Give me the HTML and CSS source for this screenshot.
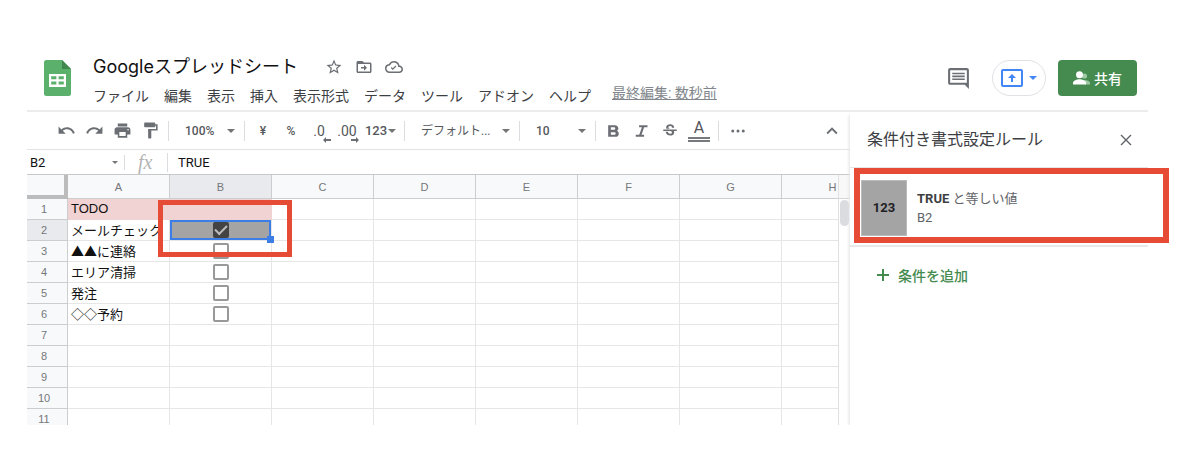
FILE: index.html
```
<!DOCTYPE html>
<html lang="ja">

<head>
  <title>Googleスプレッドシート</title>

  <meta charset="utf-8" />
  <meta name="viewport" content="width=device-width, initial-scale=1" />

  <link rel="stylesheet" href="styles.css">
</head>

<body>
  <header class="header">
    <svg class="logo" viewBox="0 0 27 36" width="27" height="36">
      <path fill="#5bb06c" d="M2.500 0H18l9 9v24.500a2.500 2.500 0 0 1-2.500 2.500h-22A2.500 2.500 0 0 1 0 33.500v-31A2.500 2.500 0 0 1 2.500 0z" />
      <path fill="#41884e" d="M18 0l9 9h-9z" />
      <path fill="#fff" fill-rule="evenodd" d="M5 14h17v13H5zM7.200 16.200v3h5.200v-3zM14.600 16.200v3h5.200v-3zM7.200 21.600v3h5.200v-3zM14.600 21.600v3h5.200v-3z" />
    </svg>

    <div class="doc">
      <div class="doc-title">
        <h1>Googleスプレッドシート</h1>
        <button class="doc-icon" aria-label="スター">
          <svg viewBox="0 0 24 24" width="18" height="18"><path d="M22 9.240l-7.190-.62L12 2 9.190 8.630 2 9.240l5.460 4.730L5.820 21 12 17.270 18.180 21l-1.630-7.030L22 9.240zM12 15.400l-3.760 2.270 1-4.280-3.320-2.880 4.380-.38L12 6.100l1.710 4.040 4.380.38-3.320 2.880 1 4.280L12 15.400z" /></svg>
        </button>
        <button class="doc-icon" aria-label="移動">
          <svg viewBox="0 0 24 24" width="18" height="18"><path d="M20 6h-8l-2-2H4c-1.100 0-2 .9-2 2v12c0 1.100.9 2 2 2h16c1.100 0 2-.9 2-2V8c0-1.100-.9-2-2-2zm0 12H4V8h16v10zm-8-1l4-4-4-4v3H8v2h4z" /></svg>
        </button>
        <button class="doc-icon" aria-label="保存済み">
          <svg viewBox="0 0 24 24" width="18" height="18"><path d="M19.350 10.040A7.490 7.490 0 0 0 12 4C9.110 4 6.600 5.640 5.350 8.040A5.994 5.994 0 0 0 0 14c0 3.310 2.690 6 6 6h13c2.760 0 5-2.240 5-5 0-2.640-2.050-4.780-4.650-4.960zM19 18H6c-2.210 0-4-1.790-4-4 0-2.050 1.530-3.760 3.560-3.970l1.070-.11.5-.95A5.469 5.469 0 0 1 12 6c2.620 0 4.880 1.860 5.390 4.430l.3 1.500 1.530.11A2.980 2.980 0 0 1 22 15c0 1.650-1.350 3-3 3zm-8.600-4.400l-1.500-1.500-1.200 1.200 2.700 2.700 4.800-4.800-1.200-1.200z" /></svg>
        </button>
      </div>
      <nav class="menu">
        <button>ファイル</button>
        <button>編集</button>
        <button>表示</button>
        <button>挿入</button>
        <button>表示形式</button>
        <button>データ</button>
        <button>ツール</button>
        <button>アドオン</button>
        <button>ヘルプ</button>
        <a class="last-edit" href="#">最終編集: 数秒前</a>
      </nav>
    </div>

    <div class="actions">
      <button class="comments" aria-label="コメント">
        <svg viewBox="0 0 24 24" width="25" height="25"><path d="M21.990 4c0-1.100-.89-2-1.990-2H4c-1.100 0-2 .9-2 2v12c0 1.100.9 2 2 2h14l4 4-.01-18zM20 4v12H4V4h16zM6 12h12v1.500H6zM6 9.200h12v1.500H6zM6 6.400h12v1.500H6z" /></svg>
      </button>
      <button class="present" aria-label="画面共有">
        <svg viewBox="0 0 22 18" width="22" height="18">
          <rect x="1" y="1" width="20" height="16" rx="1" fill="none" stroke="#4285f4" stroke-width="2" />
          <path fill="#4285f4" d="M11 5l4 4h-3v4h-2V9H7z" />
        </svg>
        <span class="arrow"></span>
      </button>
      <button class="share">
        <svg viewBox="0 0 17 14" width="17" height="14">
          <circle cx="11.500" cy="5" r="2.600" fill="#9dc8a4" />
          <path fill="#9dc8a4" d="M11 9c3 0 6 1.300 6 3v1.500h-5z" />
          <circle cx="6.500" cy="3.700" r="3.500" />
          <path d="M0 13.500V12c0-2.400 4-3.700 6.500-3.700S13 9.600 13 12v1.500z" />
        </svg>
        共有
      </button>
    </div>
  </header>

  <div class="workspace">
    <main class="editor">
      <div class="toolbar">
        <button class="tool" aria-label="元に戻す">
          <svg viewBox="0 0 24 24" width="19" height="19"><path d="M12.500 8c-2.650 0-5.050.99-6.900 2.600L2 7v9h9l-3.620-3.620c1.390-1.160 3.160-1.880 5.120-1.880 3.540 0 6.550 2.310 7.600 5.500l2.370-.78C21.080 11.030 17.150 8 12.500 8z" /></svg>
        </button>
        <button class="tool" aria-label="やり直し">
          <svg viewBox="0 0 24 24" width="19" height="19"><path d="M18.400 10.600C16.550 8.990 14.150 8 11.500 8c-4.650 0-8.580 3.030-9.960 7.220L3.900 16c1.050-3.190 4.050-5.500 7.600-5.500 1.950 0 3.730.72 5.120 1.880L13 16h9V7l-3.600 3.600z" /></svg>
        </button>
        <button class="tool" aria-label="印刷">
          <svg viewBox="0 0 24 24" width="19" height="19"><path d="M19 8H5c-1.660 0-3 1.340-3 3v6h4v4h12v-4h4v-6c0-1.660-1.340-3-3-3zm-3 11H8v-5h8v5zm3-7c-.55 0-1-.45-1-1s.45-1 1-1 1 .45 1 1-.45 1-1 1zm-1-9H6v4h12V3z" /></svg>
        </button>
        <button class="tool" aria-label="書式を貼り付け">
          <svg viewBox="0 0 24 24" width="19" height="19"><path d="M18 4V3c0-.55-.45-1-1-1H5c-.55 0-1 .45-1 1v4c0 .55.45 1 1 1h12c.55 0 1-.45 1-1V6h1v4H9v11c0 .55.45 1 1 1h2c.55 0 1-.45 1-1v-9h8V4h-3z" /></svg>
        </button>
        <span class="sep"></span>
        <label class="pick"><select aria-label="ズーム"><option>100%</option></select></label>
        <span class="sep"></span>
        <button class="tool">¥</button>
        <button class="tool">%</button>
        <button class="tool decimal">.0
          <svg viewBox="0 0 8 6" width="8" height="6"><path d="M3 0L0 3l3 3V4h5V2H3z" /></svg>
        </button>
        <button class="tool decimal">.00
          <svg viewBox="0 0 8 6" width="8" height="6"><path d="M5 0l3 3-3 3V4H0V2h5z" /></svg>
        </button>
        <button class="tool format">123<span class="arrow"></span></button>
        <span class="sep"></span>
        <label class="pick font"><select aria-label="フォント"><option>デフォルト...</option></select></label>
        <span class="sep"></span>
        <label class="pick"><select aria-label="フォントサイズ"><option>10</option></select></label>
        <span class="sep"></span>
        <button class="tool" aria-label="太字">
          <svg viewBox="0 0 24 24" width="20" height="20"><path d="M15.600 11.790c.97-.67 1.650-1.770 1.650-2.790 0-2.260-1.750-4-4-4H5v14h9.040c2.090 0 3.710-1.700 3.710-3.790 0-1.520-.86-2.820-2.150-3.420zM8.200 7.500H12c.83 0 1.500.67 1.500 1.500s-.67 1.500-1.500 1.500H8.200v-3zm4.300 9H8.200v-3h4.300c.83 0 1.500.67 1.500 1.500s-.67 1.500-1.500 1.500z" /></svg>
        </button>
        <button class="tool" aria-label="斜体">
          <svg viewBox="0 0 24 24" width="20" height="20"><path d="M8.500 5v2.500h3.400l-3.200 9H4.500V19h10v-2.500h-3.100l3.200-9h4V5z" /></svg>
        </button>
        <button class="tool" aria-label="取り消し線">
          <svg viewBox="0 0 24 24" width="18" height="18"><path d="M6.850 7.080C6.850 4.370 9.450 3 12.240 3c1.640 0 3 .49 3.900 1.280.77.65 1.460 1.730 1.460 3.240h-3.010c0-.31-.05-.59-.15-.85-.29-.86-1.200-1.280-2.250-1.280-1.860 0-2.340 1.020-2.340 1.700 0 .48.250.88.740 1.210.38.250.77.480 1.410.7H7.390c-.21-.34-.54-.89-.54-1.920zM21 12v-2H3v2h9.620c1.150.45 1.960.75 1.960 1.970 0 1-.81 1.670-2.280 1.670-1.540 0-2.930-.54-2.930-2.510H6.400c0 .55.08 1.130.24 1.580.81 2.290 3.290 3.300 5.670 3.300 2.270 0 5.300-.89 5.300-4.050 0-.3-.01-1.160-.48-1.960H21V12z" /></svg>
        </button>
        <button class="tool color">A</button>
        <span class="sep"></span>
        <button class="tool more" aria-label="もっと見る">
          <svg viewBox="0 0 24 24" width="18" height="18"><circle cx="5" cy="12" r="2" /><circle cx="12" cy="12" r="2" /><circle cx="19" cy="12" r="2" /></svg>
        </button>
        <button class="tool collapse" aria-label="メニューを非表示">
          <svg viewBox="0 0 24 24" width="22" height="22"><path d="M12 8l-6 6 1.410 1.410L12 10.830l4.590 4.580L18 14z" /></svg>
        </button>
      </div>

      <div class="formula-bar">
        <label class="name-box"><input type="text" value="B2" aria-label="名前ボックス" /><span class="arrow"></span></label>
        <label class="fx" for="formula">fx</label>
        <input type="text" id="formula" value="TRUE" />
      </div>

      <div class="sheet">
        <div class="cells">
          <table>
            <colgroup>
              <col class="col-num" />
              <col span="8" class="col" />
            </colgroup>
            <thead>
              <tr>
                <th class="corner"></th>
                <th>A</th>
                <th class="active">B</th>
                <th>C</th>
                <th>D</th>
                <th>E</th>
                <th>F</th>
                <th>G</th>
                <th>H</th>
              </tr>
            </thead>
            <tbody>
              <tr>
                <th>1</th>
                <td class="pink">TODO</td>
                <td class="pink"></td>
                <td></td><td></td><td></td><td></td><td></td><td></td>
              </tr>
              <tr>
                <th class="active">2</th>
                <td>メールチェック</td>
                <td class="check selected">
                  <input type="checkbox" aria-label="メールチェック" checked />
                  <span class="handle"></span>
                  <span class="callout callout-cell"></span>
                </td>
                <td></td><td></td><td></td><td></td><td></td><td></td>
              </tr>
              <tr>
                <th>3</th>
                <td>▲▲に連絡</td>
                <td class="check"><input type="checkbox" aria-label="▲▲に連絡" /></td>
                <td></td><td></td><td></td><td></td><td></td><td></td>
              </tr>
              <tr>
                <th>4</th>
                <td>エリア清掃</td>
                <td class="check"><input type="checkbox" aria-label="エリア清掃" /></td>
                <td></td><td></td><td></td><td></td><td></td><td></td>
              </tr>
              <tr>
                <th>5</th>
                <td>発注</td>
                <td class="check"><input type="checkbox" aria-label="発注" /></td>
                <td></td><td></td><td></td><td></td><td></td><td></td>
              </tr>
              <tr>
                <th>6</th>
                <td>◇◇予約</td>
                <td class="check"><input type="checkbox" aria-label="◇◇予約" /></td>
                <td></td><td></td><td></td><td></td><td></td><td></td>
              </tr>
              <tr><th>7</th><td></td><td></td><td></td><td></td><td></td><td></td><td></td><td></td></tr>
              <tr><th>8</th><td></td><td></td><td></td><td></td><td></td><td></td><td></td><td></td></tr>
              <tr><th>9</th><td></td><td></td><td></td><td></td><td></td><td></td><td></td><td></td></tr>
              <tr><th>10</th><td></td><td></td><td></td><td></td><td></td><td></td><td></td><td></td></tr>
              <tr><th>11</th><td></td><td></td><td></td><td></td><td></td><td></td><td></td><td></td></tr>
            </tbody>
          </table>
        </div>
        <div class="scrollbar"><div class="thumb"></div></div>
      </div>
    </main>

    <aside class="panel">
      <div class="panel-head">
        <h2>条件付き書式設定ルール</h2>
        <button class="close" aria-label="閉じる">
          <svg viewBox="0 0 12 12" width="12" height="12"><path d="M1 1l10 10M11 1L1 11" /></svg>
        </button>
      </div>
      <div class="rule">
        <div class="swatch">123</div>
        <div class="rule-text">
          <div><b>TRUE</b> と等しい値</div>
          <div>B2</div>
        </div>
        <span class="callout callout-rule"></span>
      </div>
      <button class="add">
        <svg viewBox="0 0 12 12" width="12" height="12"><path d="M5 0h2v5h5v2H7v5H5V7H0V5h5z" /></svg>
        条件を追加
      </button>
    </aside>
  </div>
</body>

</html>
```
FILE: styles.css
```
*,
*::before,
*::after {
  box-sizing: border-box;
}

body {
  display: flex;
  flex-direction: column;
  height: 100vh;
  margin: 0;
  padding: 44px 52px 46px 27px;
  background: #fff;
  color: #3c4043;
  font-family: Roboto, "Noto Sans CJK JP", sans-serif;
  font-size: 14px;
}

button {
  padding: 0;
  border: 0;
  background: none;
  color: inherit;
  font: inherit;
  white-space: nowrap;
}

svg {
  display: block;
  fill: #6b6f74;
}

.arrow,
.pick::after {
  flex: none;
  border: 4px solid transparent;
  border-top-color: #757575;
  border-bottom: 0;
  content: "";
}

/* header */
.header {
  display: flex;
  align-items: flex-start;
  padding: 8px 11px 0 17px;
  border-bottom: 2px solid #ececec;
}

.logo {
  margin-top: 8px;
}

.doc {
  flex: 1;
  min-width: 0;
  margin-left: 22px;
}

.doc-title {
  display: flex;
  align-items: center;
  gap: 12px;
  height: 30px;
}

.doc-title h1 {
  margin: 0 15px 0 0;
  color: #111;
  font-family: Inter, "Noto Sans CJK JP", sans-serif;
  font-size: 18px;
  font-weight: 400;
  line-height: 28px;
  white-space: nowrap;
}

.menu {
  display: flex;
  gap: 15px;
  height: 28px;
  line-height: 28px;
}

.last-edit {
  margin-left: 6px;
  color: #80868b;
  line-height: 22px;
  white-space: nowrap;
}

.actions {
  display: flex;
  align-items: center;
  gap: 12px;
  margin-top: 8px;
}

.comments {
  margin-right: 9px;
}

.present {
  display: flex;
  align-items: center;
  justify-content: center;
  gap: 6px;
  width: 54px;
  height: 36px;
  border: 1px solid #dfe1e5;
  border-radius: 18px;
}

.present .arrow {
  border-top-color: #4285f4;
}

.share {
  display: flex;
  align-items: center;
  justify-content: center;
  gap: 4px;
  width: 79px;
  height: 36px;
  border-radius: 4px;
  background: #458b50;
  color: #fff;
  font-weight: 500;
}

.share svg {
  fill: #fff;
}

/* editor */
.workspace {
  display: flex;
  flex: 1;
  min-height: 0;
}

.editor {
  display: flex;
  flex: 1;
  flex-direction: column;
  min-width: 0;
}

.toolbar {
  display: flex;
  align-items: center;
  height: 38px;
  padding: 0 4px 0 25px;
  border-bottom: 1px solid #e2e3e3;
}

.tool {
  display: flex;
  align-items: center;
  justify-content: center;
  width: 28px;
  height: 28px;
  color: #55585c;
  font-size: 12px;
  font-weight: 500;
}

.decimal {
  position: relative;
  font-size: 14px;
  font-weight: 400;
}

.decimal svg {
  position: absolute;
  right: 2px;
  bottom: 2px;
}

.format {
  gap: 1px;
  width: 39px;
  font-size: 13px;
}

.color {
  flex-direction: column;
  margin: 0 4px;
  width: 22px;
  font-size: 16px;
  font-weight: 400;
  line-height: 18px;
}

.color::after {
  width: 22px;
  height: 5px;
  border: solid #77797c;
  border-width: 2px 0;
  content: "";
}

.more {
  margin-left: 1px;
}

.collapse {
  margin-left: auto;
}

.sep {
  width: 1px;
  height: 20px;
  margin: 0 4px;
  background: #dadce0;
}

.pick {
  display: flex;
  align-items: center;
  width: 67px;
  padding: 0 5px 0 12px;
}

.pick.font {
  width: 106px;
}

select,
input[type="text"] {
  flex: 1;
  min-width: 0;
  padding: 0;
  border: 0;
  background: none;
  color: #55585c;
  font: inherit;
  outline: 0;
  appearance: none;
}

select {
  font-size: 12px;
  font-weight: 500;
}

.font select {
  font-size: 12px;
  font-weight: 400;
}

.formula-bar {
  display: flex;
  align-items: center;
  height: 24px;
}

.formula-bar input {
  color: #111;
  font-size: 13px;
}

.name-box {
  display: flex;
  align-items: center;
  width: 98px;
  padding: 0 6px 0 3px;
  border-right: 1px solid #dadce0;
}

.name-box .arrow {
  border-width: 3px 3px 0;
}

.fx {
  width: 43px;
  margin-right: 10px;
  padding-left: 13px;
  border-right: 1px solid #dadce0;
  color: #b4b4b4;
  font: italic 20px/19px "Liberation Serif", serif;
}

.sheet {
  display: flex;
  flex: 1;
  min-height: 0;
  border-top: 1px solid #c6c8ca;
}

.cells {
  flex: 1;
  min-width: 0;
  overflow: hidden;
}

table {
  width: 857px;
  border-spacing: 0;
  table-layout: fixed;
}

.col-num {
  width: 41px;
}

.col {
  width: 102px;
}

th,
td {
  height: 21px;
  padding: 0;
  border: solid #e6e6e6;
  border-width: 0 1px 1px 0;
}

th {
  border-color: #cbcdcf;
  background: #f8f9fb;
  color: #74777a;
  font: 11px/20px "Liberation Sans", sans-serif;
}

tbody th {
  padding-right: 6px;
}

thead th {
  height: 24px;
}

th.active {
  background: #e8eaed;
}

th.corner {
  border: solid #bcbcbc;
  border-width: 0 4px 4px 0;
}

td {
  padding-left: 3px;
  color: #111;
  font: 13px/20px "Noto Sans CJK JP", sans-serif;
  white-space: nowrap;
  overflow: hidden;
}

td.pink {
  border-color: #efd2d2;
  background: #f1d3d3;
  font-family: "Liberation Sans", sans-serif;
}

td.check {
  padding: 0;
}

td.selected {
  position: relative;
  background: #a4a4a4;
  box-shadow: inset 0 0 0 2px #3d7ee6;
  overflow: visible;
}

input[type="checkbox"] {
  display: block;
  width: 16px;
  height: 16px;
  margin: 0 auto;
  border: 2px solid #999;
  border-radius: 2px;
  background: #fff;
  appearance: none;
}

input[type="checkbox"]:checked {
  border-color: #434343;
  background: #434343;
}

input[type="checkbox"]:checked::after {
  display: block;
  width: 12px;
  height: 7px;
  margin-top: 1px;
  border: solid #bbb;
  border-width: 0 0 2px 2px;
  transform: rotate(-45deg);
  content: "";
}

.handle {
  position: absolute;
  right: -3px;
  bottom: -3px;
  width: 7px;
  height: 7px;
  background: #3d7ee6;
}

.callout {
  position: absolute;
  z-index: 2;
  border: 6px solid #e54b35;
  pointer-events: none;
}

.callout-cell {
  inset: -20px -21px -17px -12px;
  border-width: 5px;
}

.callout-rule {
  inset: 0 -21px 2px 4px;
}

.scrollbar {
  width: 12px;
  border-left: 1px solid #e0e0e0;
}

.scrollbar::before {
  display: block;
  height: 24px;
  border-bottom: 1px solid #d5d5d5;
  background: #f8f8f8;
  content: "";
}

.thumb {
  width: 9px;
  height: 26px;
  margin: 1px auto 0;
  border-radius: 5px;
  background: #dadce0;
}

/* side panel */
.panel {
  width: 298px;
  background: #fff;
  box-shadow: -2px 2px 3px -1px #e2e2e2;
  clip-path: inset(0 -30px 0 -6px);
}

.panel-head {
  display: flex;
  align-items: center;
  justify-content: space-between;
  height: 56px;
  padding: 0 16px 0 17px;
  border-bottom: 1px solid #e6e6e6;
}

.panel h2 {
  margin: 0 0 4px;
  font-size: 16px;
  font-weight: 400;
}

.close path {
  fill: none;
  stroke: #5f6368;
  stroke-width: 1.400;
}

.rule {
  position: relative;
  display: flex;
  align-items: center;
  gap: 10px;
  height: 79px;
  padding: 2px 11px 0;
  border-bottom: 2px solid #e8e8e8;
}

.swatch {
  width: 46px;
  border: 1px solid #b9bcbc;
  background: #a4a4a4;
  color: #202124;
  font-size: 13px;
  font-weight: 700;
  line-height: 54px;
  text-align: center;
}

.rule-text {
  color: #5f6368;
  font-size: 13px;
  line-height: 19px;
}

.rule-text b {
  color: #3c4043;
}

.add {
  display: flex;
  align-items: center;
  gap: 9px;
  margin: 18px 0 0 27px;
  color: #458b50;
  font-size: 14px;
  font-weight: 500;
}

.add svg {
  fill: #458b50;
}
```
